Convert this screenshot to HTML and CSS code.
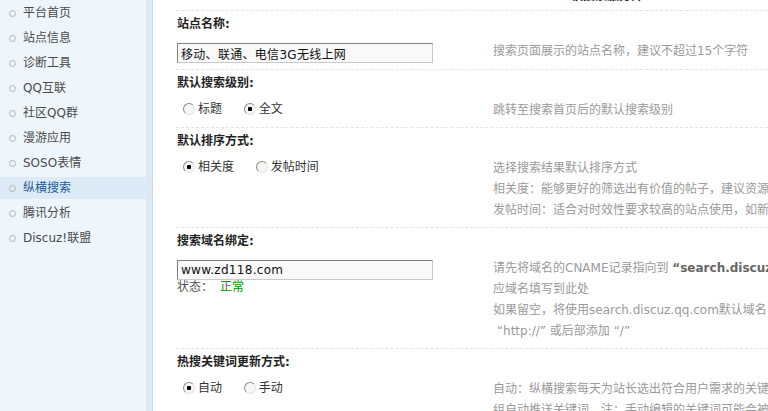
FILE: index.html
```html
<!DOCTYPE html>
<html lang="zh-CN">
<head>
	<meta charset="UTF-8">
	<title>纵横搜索设置</title>
	<link rel="stylesheet" href="styles.css">
</head>
<body>
	<ul class="menu">
		<li><i></i>平台首页</li>
		<li><i></i>站点信息</li>
		<li><i></i>诊断工具</li>
		<li><i></i>QQ互联</li>
		<li><i></i>社区QQ群</li>
		<li><i></i>漫游应用</li>
		<li><i></i>SOSO表情</li>
		<li class="on"><i></i>纵横搜索</li>
		<li><i></i>腾讯分析</li>
		<li><i></i>Discuz!联盟</li>
	</ul>
	<div class="main">
		<div class="prev"><p>纵横搜索服务开</p></div>

		<div class="item">
			<div class="label">站点名称:</div>
			<div class="row">
				<div class="form"><input class="txt" type="text" value="移动、联通、电信3G无线上网"></div>
				<div class="tips">搜索页面展示的站点名称，建议不超过15个字符</div>
			</div>
		</div>

		<div class="item">
			<div class="label">默认搜索级别:</div>
			<div class="row">
				<div class="form radios">
					<label><input type="radio" name="level">标题</label>
					<label><input type="radio" name="level" checked>全文</label>
				</div>
				<div class="tips">跳转至搜索首页后的默认搜索级别</div>
			</div>
		</div>

		<div class="item">
			<div class="label">默认排序方式:</div>
			<div class="row">
				<div class="form radios">
					<label><input type="radio" name="order" checked>相关度</label>
					<label><input type="radio" name="order">发帖时间</label>
				</div>
				<div class="tips">
					选择搜索结果默认排序方式<br>
					相关度：能够更好的筛选出有价值的帖子，建议资源类站点使用<br>
					发帖时间：适合对时效性要求较高的站点使用，如新闻资讯类站点
				</div>
			</div>
		</div>

		<div class="item">
			<div class="label">搜索域名绑定:</div>
			<div class="row">
				<div class="form">
					<input class="txt" type="text" value="www.zd118.com">
					<div class="state">状态：<span>正常</span></div>
				</div>
				<div class="tips">
					请先将域名的CNAME记录指向到 <strong>“search.discuz.qq.com”</strong>，然后将对<br>
					应域名填写到此处<br>
					如果留空，将使用search.discuz.qq.com默认域名，域名前不要添加<br>
					&nbsp;“http://” 或后部添加 “/”
				</div>
			</div>
		</div>

		<div class="item">
			<div class="label">热搜关键词更新方式:</div>
			<div class="row">
				<div class="form radios">
					<label><input type="radio" name="hot" checked>自动</label>
					<label><input type="radio" name="hot">手动</label>
				</div>
				<div class="tips">
					自动：纵横搜索每天为站长选出符合用户需求的关键词，并定时更新<br>
					组自动推送关键词，注：手动编辑的关键词可能会被覆盖
				</div>
			</div>
		</div>
	</div>
</body>
</html>
```

FILE: styles.css
```css
*{margin:0;padding:0}
html,body{height:100%;overflow:hidden}
body{
	display:flex;
	font:12px "DejaVu Sans", "Noto Sans CJK SC", sans-serif;
	color:#333;
	background:#fff;
}
/* 左侧菜单 */
.menu{
	width:146px;
	flex:none;
	background:#eef6fc;
	border-right:6px solid #dceaf6;
	list-style:none;
	padding-top:2px;
}
.menu li{
	height:22px;
	line-height:22px;
	margin-bottom:3px;
	padding-left:23px;
	color:#4a4a4a;
	position:relative;
	white-space:nowrap;
}
.menu li i{
	position:absolute;
	left:9px;
	top:8px;
	width:5px;
	height:5px;
	border:1px solid #b4b4b4;
	border-radius:50%;
}
.menu li.on{
	background:#dcebf7;
	color:#1f5c99;
}
/* 右侧内容 */
.main{
	flex:1;
	min-width:0;
	border-left:1px solid #c6dbec;
	padding-left:23px;
}
.prev{
	height:10px;
	overflow:hidden;
}
.prev p{
	margin:-11px 0 0 383px;
	line-height:14px;
	font-weight:bold;
	color:#333;
	white-space:nowrap;
}
.item{
	border-top:1px dashed #dbe7f1;
	padding:0 0 6px 1px;
	width:1000px;
}
.label{
	padding-top:5px;
	line-height:16px;
	font-weight:bold;
	color:#222;
}
.row{
	display:grid;
	grid-template-columns:316px auto;
	padding-top:11px;
}
.txt{
	display:block;
	width:256px;
	height:20px;
	box-sizing:border-box;
	padding:0 3px;
	border:1px solid;
	border-color:#7f7f7f #c9c9c9 #c9c9c9 #7f7f7f;
	background:#f9f9f9;
	font:12px "DejaVu Sans", "Noto Sans CJK SC", sans-serif;
	letter-spacing:0.3px;
	color:#111;
	outline:none;
}
.state{
	line-height:14px;
	color:#555;
}
.state span{
	color:#090;
	margin-left:7px;
}
.radios{
	line-height:14px;
}
.radios label{
	display:inline-flex;
	align-items:center;
	margin:0 12px 0 6px;
	color:#333;
}
.radios input{
	appearance:none;
	-webkit-appearance:none;
	width:12px;
	height:12px;
	margin:0 3px 0 0;
	border:1px solid;
	border-color:#8d8d8d #e4e4e4 #e4e4e4 #8d8d8d;
	border-radius:50%;
	background:#f6f6f4;
	box-sizing:border-box;
}
.radios input:checked{
	background:radial-gradient(circle, #000 0, #000 2px, #f6f6f4 2.5px);
}
.tips{
	margin-top:-2px;
	line-height:21px;
	color:#9a9a9a;
	white-space:nowrap;
}
.tips strong{
	color:#666;
}
```
